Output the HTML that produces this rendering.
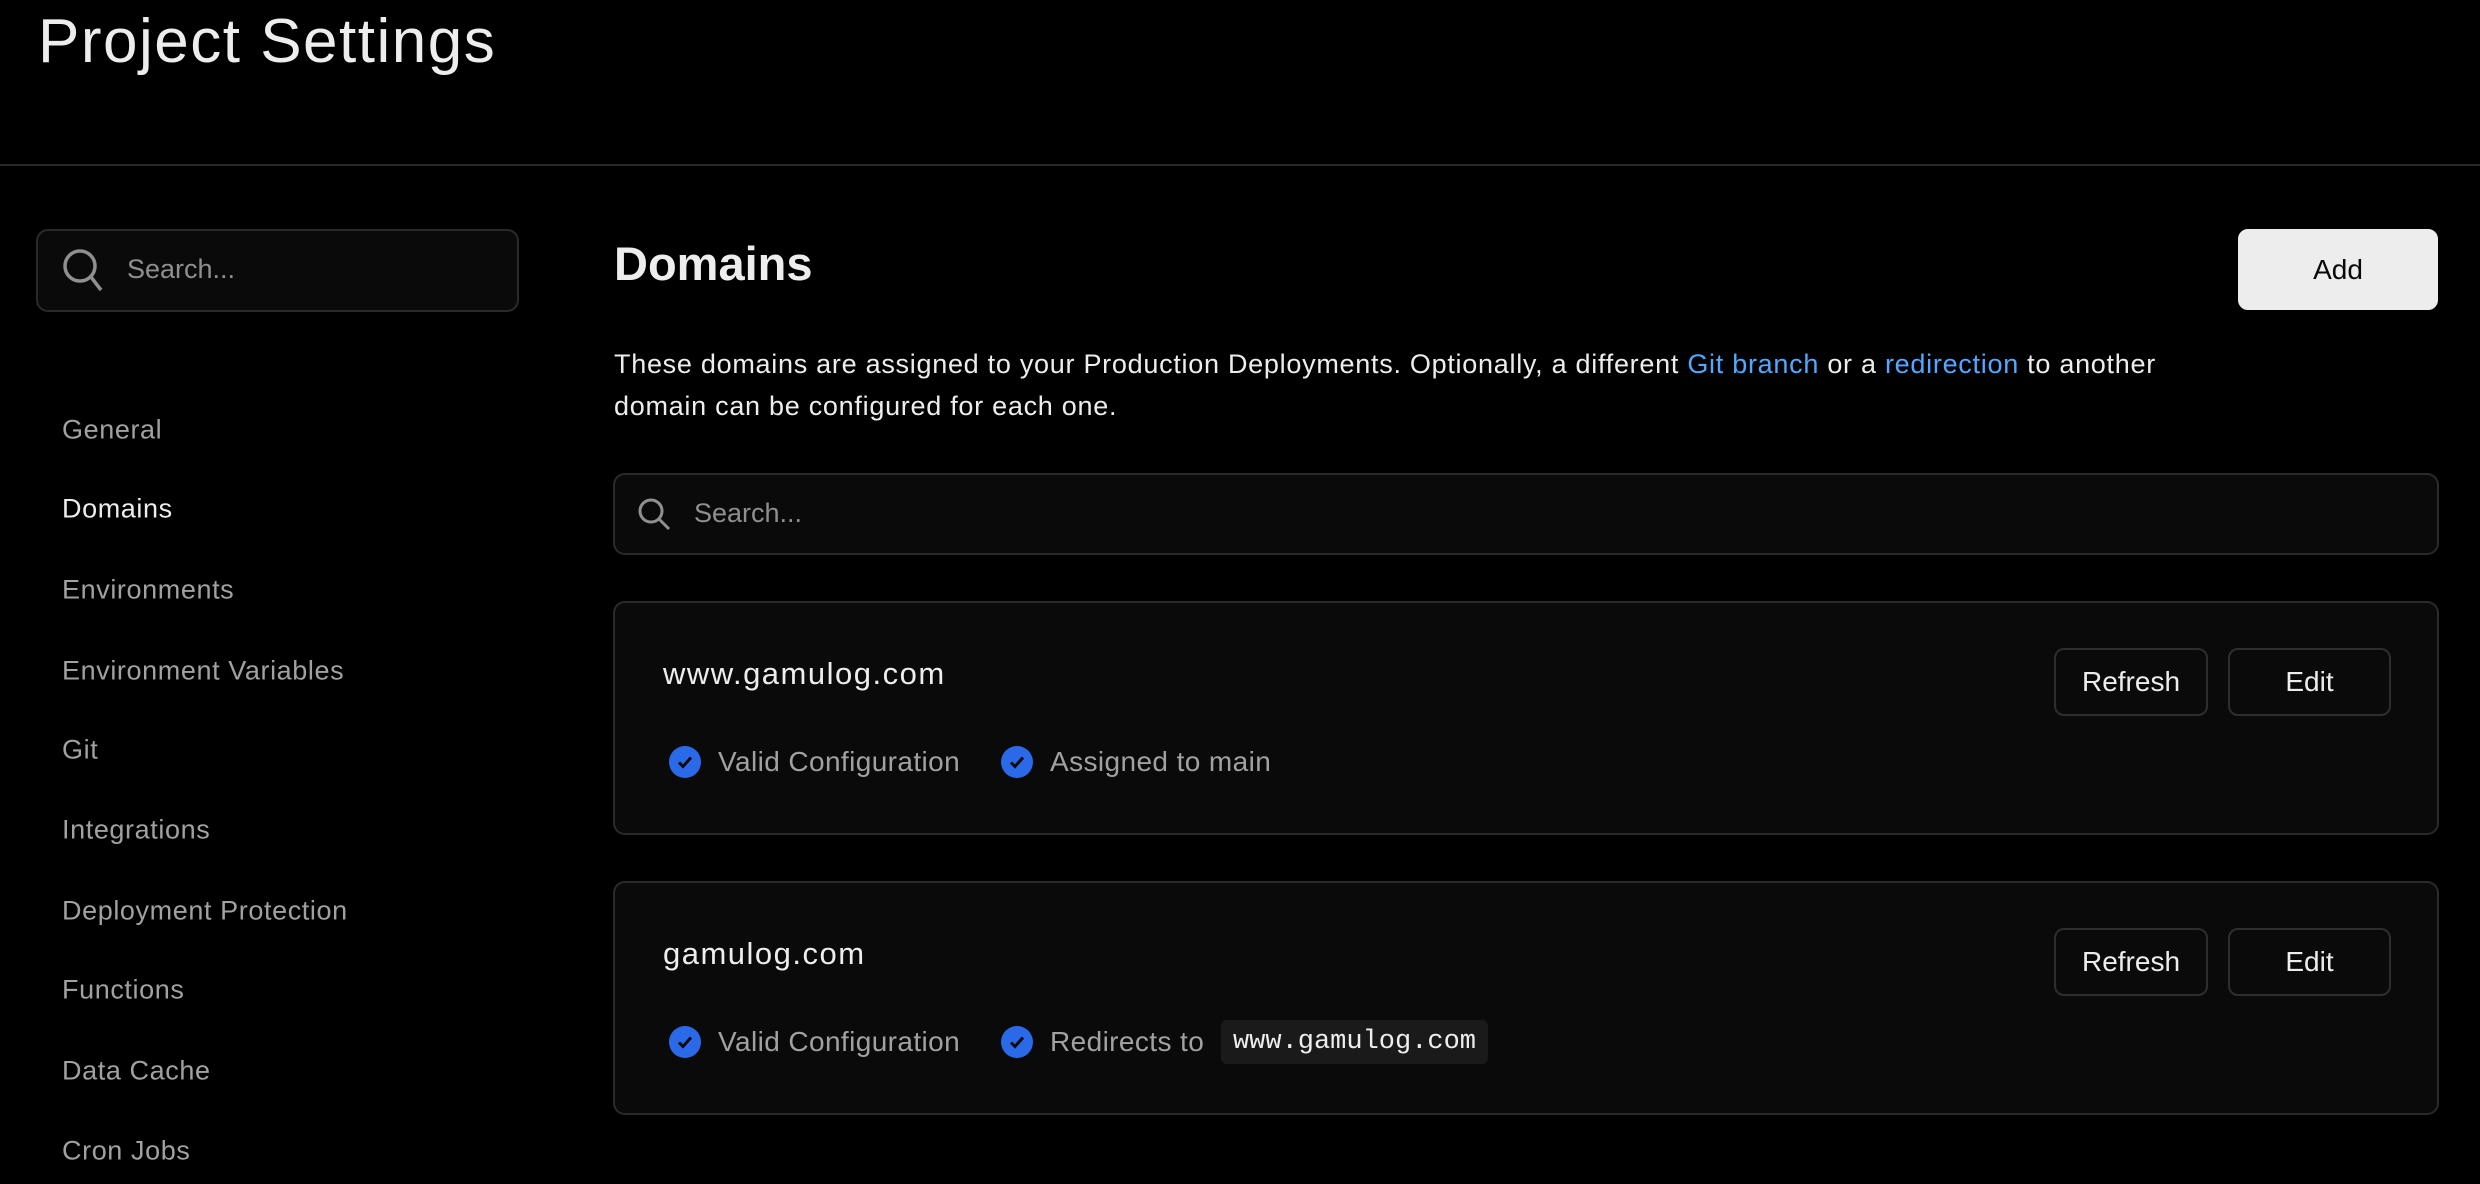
<!DOCTYPE html>
<html><head><meta charset="utf-8"><style>
*{box-sizing:border-box;margin:0;padding:0}
body{width:2480px;height:1184px;background:#000;color:#ededed;font-family:"Liberation Sans",sans-serif;position:relative;overflow:hidden}
.a{position:absolute;white-space:nowrap}
.title{left:38px;top:6px;font-size:62px;font-weight:500;letter-spacing:1.5px}
.hr{left:0;top:164px;width:2480px;height:2px;background:#2a2a2a}
.box{position:absolute;background:#0a0a0a;border:2px solid #2a2a2a;border-radius:12px}
.ph{color:#8f8f8f;font-size:27px}
.nav{left:62px;font-size:27px;color:#a1a1a1;transform:translateY(-50%);letter-spacing:0.6px}
.btn{position:absolute;border:2px solid #2e2e2e;border-radius:10px;background:#0a0a0a;color:#ededed;font-size:28px;display:flex;align-items:center;justify-content:center}
.ck{position:absolute;width:32px;height:32px;border-radius:50%;background:#2a6ae8}
.bt{font-size:28px;color:#a1a1a1;transform:translateY(-50%);letter-spacing:0.4px}
.dn{font-size:31px;color:#ededed;transform:translateY(-50%);letter-spacing:1.5px}
a{color:#52a8ff;text-decoration:none}
</style></head><body>
<div class="a title">Project Settings</div>
<div class="a hr"></div>

<div class="box" style="left:36px;top:229px;width:483px;height:83px"></div>
<svg class="a" style="left:60px;top:246px" width="46" height="50" viewBox="0 0 46 50"><circle cx="20" cy="20" r="15" fill="none" stroke="#8f8f8f" stroke-width="3.5"/><line x1="31" y1="31" x2="41" y2="44" stroke="#8f8f8f" stroke-width="3.5"/></svg>
<div class="a ph" style="left:127px;top:254px">Search...</div>

<div class="a nav" style="top:430px">General</div>
<div class="a nav" style="top:509px;color:#ededed">Domains</div>
<div class="a nav" style="top:590px">Environments</div>
<div class="a nav" style="top:671px">Environment Variables</div>
<div class="a nav" style="top:750px">Git</div>
<div class="a nav" style="top:830px">Integrations</div>
<div class="a nav" style="top:911px">Deployment Protection</div>
<div class="a nav" style="top:990px">Functions</div>
<div class="a nav" style="top:1071px">Data Cache</div>
<div class="a nav" style="top:1151px">Cron Jobs</div>

<div class="a" style="left:614px;top:236px;font-size:47px;font-weight:bold">Domains</div>
<div class="btn" style="left:2238px;top:229px;width:200px;height:81px;background:#ededed;border-color:#ededed;color:#0a0a0a">Add</div>
<div class="a" style="left:614px;top:343px;font-size:27px;line-height:42px;color:#ededed;letter-spacing:0.72px">These domains are assigned to your Production Deployments. Optionally, a different <a>Git branch</a> or a <a>redirection</a> to another<br>domain can be configured for each one.</div>

<div class="box" style="left:613px;top:473px;width:1826px;height:82px"></div>
<svg class="a" style="left:636px;top:496px" width="38" height="38" viewBox="0 0 38 38"><circle cx="15" cy="15" r="11" fill="none" stroke="#8f8f8f" stroke-width="3"/><line x1="23" y1="23" x2="33" y2="33" stroke="#8f8f8f" stroke-width="3"/></svg>
<div class="a ph" style="left:694px;top:498px">Search...</div>

<div class="box" style="left:613px;top:601px;width:1826px;height:234px"></div>
<div class="a dn" style="left:663px;top:674px">www.gamulog.com</div>
<div class="btn" style="left:2054px;top:648px;width:154px;height:68px">Refresh</div>
<div class="btn" style="left:2228px;top:648px;width:163px;height:68px">Edit</div>
<div class="ck" style="left:669px;top:746px"><svg width="32" height="32"><path d="M10 16.5l4 4 8-9" fill="none" stroke="#0a0a0a" stroke-width="3"/></svg></div>
<div class="a bt" style="left:718px;top:762px">Valid Configuration</div>
<div class="ck" style="left:1001px;top:746px"><svg width="32" height="32"><path d="M10 16.5l4 4 8-9" fill="none" stroke="#0a0a0a" stroke-width="3"/></svg></div>
<div class="a bt" style="left:1050px;top:762px">Assigned to main</div>

<div class="box" style="left:613px;top:881px;width:1826px;height:234px"></div>
<div class="a dn" style="left:663px;top:954px">gamulog.com</div>
<div class="btn" style="left:2054px;top:928px;width:154px;height:68px">Refresh</div>
<div class="btn" style="left:2228px;top:928px;width:163px;height:68px">Edit</div>
<div class="ck" style="left:669px;top:1026px"><svg width="32" height="32"><path d="M10 16.5l4 4 8-9" fill="none" stroke="#0a0a0a" stroke-width="3"/></svg></div>
<div class="a bt" style="left:718px;top:1042px">Valid Configuration</div>
<div class="ck" style="left:1001px;top:1026px"><svg width="32" height="32"><path d="M10 16.5l4 4 8-9" fill="none" stroke="#0a0a0a" stroke-width="3"/></svg></div>
<div class="a bt" style="left:1050px;top:1042px">Redirects to</div>
<div class="a" style="left:1221px;top:1020px;width:267px;height:44px;background:#1a1a1a;border-radius:6px;font-family:'Liberation Mono',monospace;font-size:27px;color:#ededed;display:flex;align-items:center;justify-content:center">www.gamulog.com</div>
</body></html>
